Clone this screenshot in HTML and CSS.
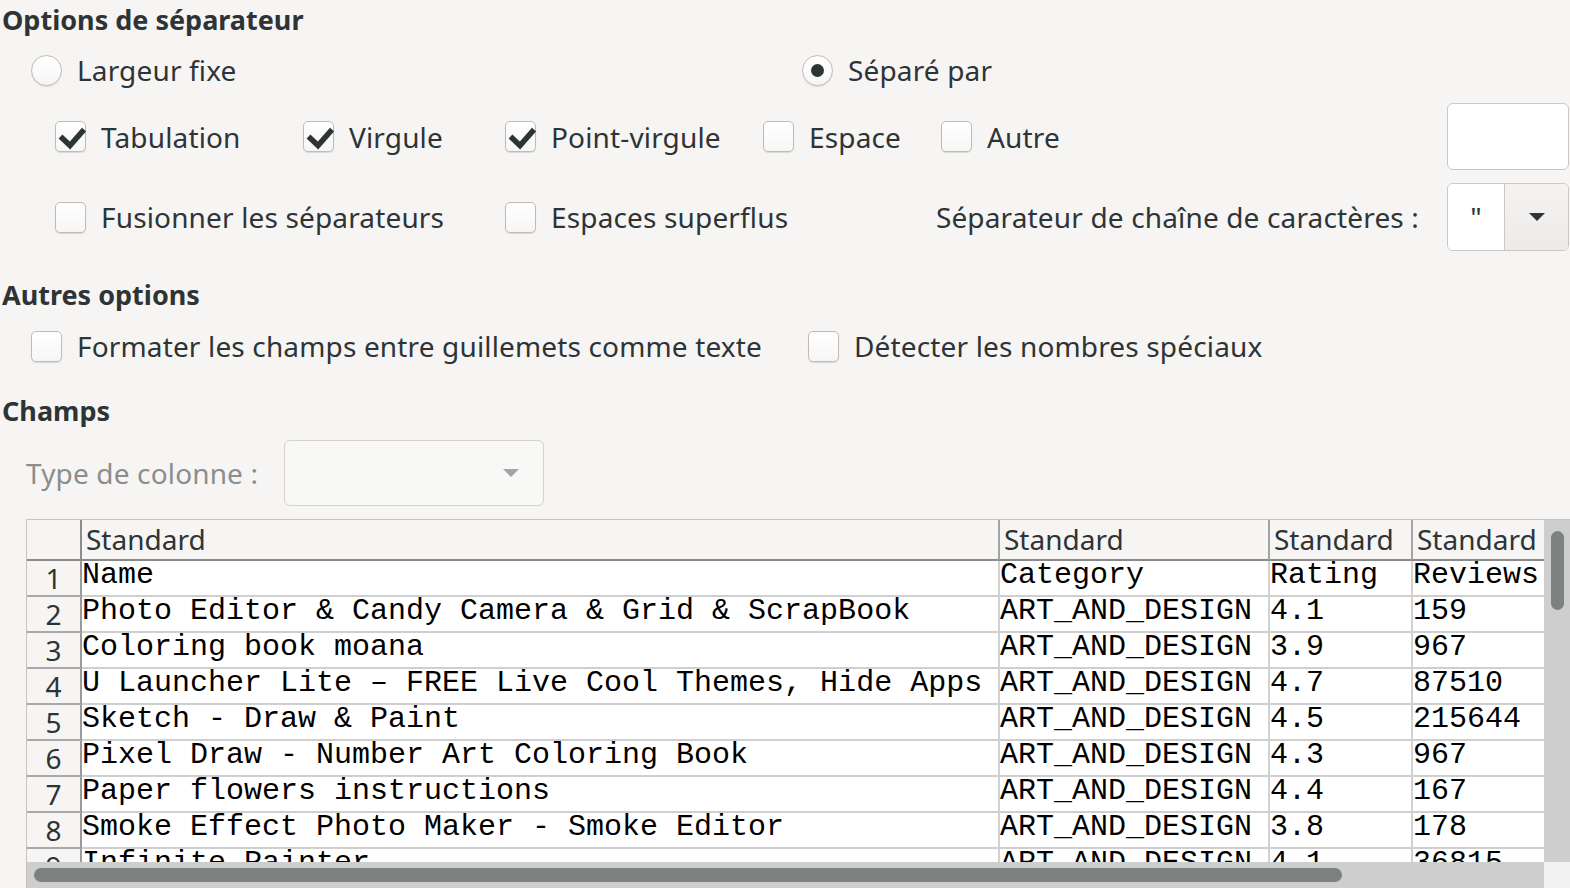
FILE: index.html
```html
<!DOCTYPE html>
<html lang="fr">
<head>
<meta charset="utf-8">
<title>Import de texte</title>
<link rel="stylesheet" href="styles.css">
</head>
<body>
<div class="dialog">
  <h2 class="section-title t-sep">Options de séparateur</h2>

  <div class="radio-row">
    <label class="opt radio-first"><span class="radio"></span><span>Largeur fixe</span></label>
    <label class="opt"><span class="radio checked"></span><span>Séparé par</span></label>
  </div>

  <div class="sep-grid">
    <label class="opt"><span class="check"><svg width="31" height="31" viewBox="0 0 31 31"><path d="M5.5 15.5 L15 24.5 L29 8.5" fill="none" stroke="#2e3436" stroke-width="5.5"/></svg></span><span>Tabulation</span></label>
    <label class="opt"><span class="check"><svg width="31" height="31" viewBox="0 0 31 31"><path d="M5.5 15.5 L15 24.5 L29 8.5" fill="none" stroke="#2e3436" stroke-width="5.5"/></svg></span><span>Virgule</span></label>
    <label class="opt"><span class="check"><svg width="31" height="31" viewBox="0 0 31 31"><path d="M5.5 15.5 L15 24.5 L29 8.5" fill="none" stroke="#2e3436" stroke-width="5.5"/></svg></span><span>Point-virgule</span></label>
    <label class="opt"><span class="check"></span><span>Espace</span></label>
    <label class="opt"><span class="check"></span><span>Autre</span></label>
    <div class="entry"></div>

    <label class="opt span2"><span class="check"></span><span>Fusionner les séparateurs</span></label>
    <label class="opt"><span class="check"></span><span>Espaces superflus</span></label>
    <span class="quote-label">Séparateur de chaîne de caractères :</span>
    <div class="combo">
      <span class="combo-text">"</span>
      <span class="combo-btn"><svg width="16" height="8" viewBox="0 0 16 8"><path d="M0 0H16L8 8Z" fill="#2e3436"/></svg></span>
    </div>
  </div>

  <h2 class="section-title t-other">Autres options</h2>
  <div class="other-row">
    <label class="opt other-first"><span class="check"></span><span>Formater les champs entre guillemets comme texte</span></label>
    <label class="opt"><span class="check"></span><span>Détecter les nombres spéciaux</span></label>
  </div>

  <h2 class="section-title t-fields">Champs</h2>
  <div class="type-row">
    <span class="type-label">Type de colonne :</span>
    <div class="combo-disabled"><svg width="16" height="8" viewBox="0 0 16 8"><path d="M0 0H16L8 8Z" fill="#a2a5a6"/></svg></div>
  </div>

  <div class="fields">
    <div class="viewport">
      <div class="grow head">
        <div class="rh"></div>
        <div class="hc c1">Standard</div>
        <div class="hc">Standard</div>
        <div class="hc">Standard</div>
        <div class="hc">Standard</div>
      </div>
      <div class="grow"><div class="rh">1</div><div class="dc c1">Name</div><div class="dc">Category</div><div class="dc">Rating</div><div class="dc">Reviews</div></div>
      <div class="grow"><div class="rh">2</div><div class="dc c1">Photo Editor &amp; Candy Camera &amp; Grid &amp; ScrapBook</div><div class="dc">ART_AND_DESIGN</div><div class="dc">4.1</div><div class="dc">159</div></div>
      <div class="grow"><div class="rh">3</div><div class="dc c1">Coloring book moana</div><div class="dc">ART_AND_DESIGN</div><div class="dc">3.9</div><div class="dc">967</div></div>
      <div class="grow"><div class="rh">4</div><div class="dc c1">U Launcher Lite – FREE Live Cool Themes, Hide Apps</div><div class="dc">ART_AND_DESIGN</div><div class="dc">4.7</div><div class="dc">87510</div></div>
      <div class="grow"><div class="rh">5</div><div class="dc c1">Sketch - Draw &amp; Paint</div><div class="dc">ART_AND_DESIGN</div><div class="dc">4.5</div><div class="dc">215644</div></div>
      <div class="grow"><div class="rh">6</div><div class="dc c1">Pixel Draw - Number Art Coloring Book</div><div class="dc">ART_AND_DESIGN</div><div class="dc">4.3</div><div class="dc">967</div></div>
      <div class="grow"><div class="rh">7</div><div class="dc c1">Paper flowers instructions</div><div class="dc">ART_AND_DESIGN</div><div class="dc">4.4</div><div class="dc">167</div></div>
      <div class="grow"><div class="rh">8</div><div class="dc c1">Smoke Effect Photo Maker - Smoke Editor</div><div class="dc">ART_AND_DESIGN</div><div class="dc">3.8</div><div class="dc">178</div></div>
      <div class="grow"><div class="rh">9</div><div class="dc c1">Infinite Painter</div><div class="dc">ART_AND_DESIGN</div><div class="dc">4.1</div><div class="dc">36815</div></div>
    </div>
    <div class="vscroll"><div class="vthumb"></div></div>
    <div class="hscroll"><div class="hthumb"></div></div>
    <div class="corner"></div>
  </div>
</div>
</body>
</html>
```

FILE: styles.css
```css
* { box-sizing: border-box; }

html, body {
  margin: 0;
  padding: 0;
}

body {
  width: 1570px;
  height: 888px;
  overflow: hidden;
  background: #f6f5f4;
  font-family: "Noto Sans", "DejaVu Sans", sans-serif;
  font-size: 28px;
  color: #2e3436;
}

.dialog {
  display: flex;
  flex-direction: column;
  height: 888px;
}

.section-title {
  margin: 0;
  padding-left: 2px;
  font-size: 27px;
  font-weight: 700;
  height: 38px;
  line-height: 38px;
  flex: none;
}

.t-sep { height: 40px; line-height: 40px; }
.t-other { margin-top: 25px; }
.t-fields { margin-top: 26px; }

.opt {
  display: flex;
  align-items: center;
  gap: 15px;
  white-space: nowrap;
  letter-spacing: 0.15px;
}

.check,
.radio {
  width: 31px;
  height: 31px;
  flex: none;
  border: 1px solid #c2bbb4;
  background: linear-gradient(#ffffff, #f6f6f5);
  box-shadow: 0 1px 1px rgba(0, 0, 0, 0.12);
  display: flex;
  align-items: center;
  justify-content: center;
}

.check { border-radius: 5px; }
.check svg { display: block; margin: -1px; }

.radio { border-radius: 50%; }
.radio.checked::after {
  content: "";
  width: 13px;
  height: 13px;
  border-radius: 50%;
  background: #2e3436;
}

.radio-row {
  display: flex;
  align-items: center;
  height: 60px;
  padding-left: 31px;
  flex: none;
}

.radio-first { width: 771px; }

.sep-grid {
  margin-top: 3px;
  display: grid;
  grid-template-columns: 248px 202px 258px 178px 1fr 122px;
  grid-template-rows: 67px 68px;
  row-gap: 13px;
  padding-left: 55px;
  padding-right: 1px;
  flex: none;
}

.span2 { grid-column: span 2; }

.quote-label {
  grid-column: span 2;
  display: flex;
  align-items: center;
  justify-content: flex-end;
  padding-right: 28px;
  white-space: nowrap;
  letter-spacing: 0.15px;
}

.entry {
  border: 1px solid #cdc7c2;
  border-radius: 6px;
  background: #ffffff;
}

.combo {
  display: flex;
  border: 1px solid #cdc7c2;
  border-radius: 6px;
  overflow: hidden;
  background: #ffffff;
}

.combo-text {
  width: 56px;
  display: flex;
  align-items: center;
  justify-content: center;
  background: #ffffff;
}

.combo-btn {
  flex: 1;
  display: flex;
  align-items: center;
  justify-content: center;
  border-left: 1px solid #cdc7c2;
  background: linear-gradient(#f4f3f2, #ecebe9);
}

.other-row {
  margin-top: 12px;
  height: 40px;
  display: flex;
  align-items: center;
  padding-left: 31px;
  flex: none;
}

.other-first { width: 777px; }

.type-row {
  margin-top: 10px;
  height: 66px;
  display: flex;
  align-items: center;
  padding-left: 26px;
  flex: none;
}

.type-label {
  width: 258px;
  color: #8b8e8f;
  white-space: nowrap;
  letter-spacing: 0.15px;
}

.combo-disabled {
  width: 260px;
  height: 66px;
  border: 1px solid #d6d1cd;
  border-radius: 6px;
  background: #f8f8f7;
  display: flex;
  align-items: center;
  justify-content: flex-end;
  padding-right: 24px;
}

.fields {
  margin-top: 13px;
  margin-left: 26px;
  height: 369px;
  border-top: 1px solid #c8c3be;
  border-left: 1px solid #c8c3be;
  display: grid;
  grid-template-columns: 1fr 26px;
  grid-template-rows: 1fr 26px;
  flex: none;
}

.viewport {
  overflow: hidden;
  background: #ffffff;
}

.grow {
  display: grid;
  grid-template-columns: 55px 916px 270px 143px 133px;
  height: 36px;
}

.grow.head { height: 41px; }

.rh {
  background: #f6f5f4;
  border-right: 2px solid #9a9a9a;
  border-bottom: 2px solid #a9a9a9;
  text-align: center;
  line-height: 34px;
  font-size: 28px;
  color: #2e3436;
}

.head .rh { border-right-color: #8c8c8c; border-bottom-color: #8a8a8a; line-height: 39px; }

.hc {
  background: #f6f5f4;
  border-left: 2px solid #a4a4a4;
  border-bottom: 2px solid #8a8a8a;
  padding-left: 4px;
  line-height: 39px;
  font-size: 28px;
  color: #2e3436;
  white-space: nowrap;
}

.hc.c1 { border-left: none; padding-left: 4px; }

.dc {
  border-left: 2px solid #d2d2d2;
  border-bottom: 2px solid #cfcfcf;
  font-family: "Liberation Mono", "DejaVu Sans Mono", monospace;
  font-size: 30px;
  line-height: 28px;
  color: #000000;
  white-space: nowrap;
}

.dc.c1 { border-left: none; }

.vscroll {
  background: #cecece;
  padding: 11px 6px 0 7px;
}

.vthumb {
  width: 13px;
  height: 79px;
  border-radius: 7px;
  background: #7e8182;
}

.hscroll {
  background: #cecece;
  padding: 6px 0 0 7px;
}

.hthumb {
  width: 1308px;
  height: 14px;
  border-radius: 7px;
  background: #7e8182;
}

.corner {
  background: #f2f2f2;
}
```
